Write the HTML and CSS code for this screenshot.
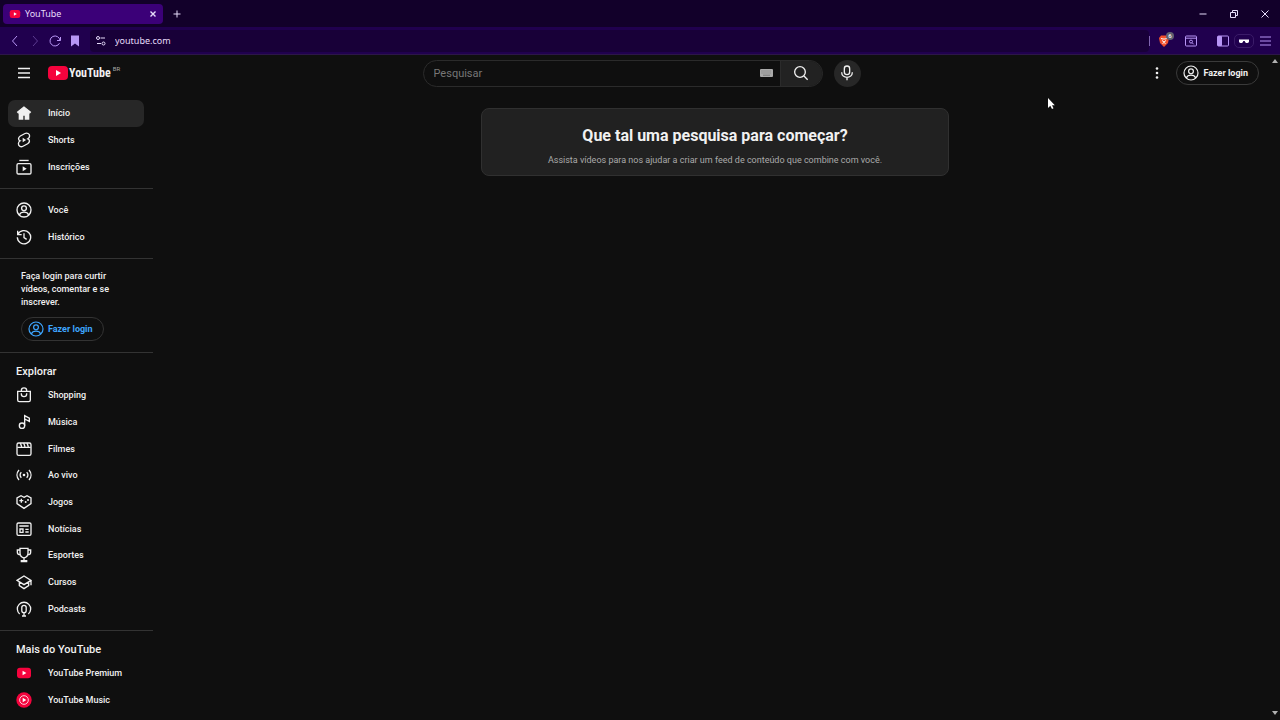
FILE: index.html
```html
<!DOCTYPE html>
<html lang="pt-BR">
<head>
  <meta charset="UTF-8" />
  <title>YouTube</title>
  <link rel="stylesheet" href="styles.css">
</head>
<body>
  <!-- shared icons -->
  <svg class="defs" aria-hidden="true">
    <symbol id="user" viewBox="0 0 24 24">
      <circle cx="12" cy="12" r="10.5" /><circle cx="12" cy="9.5" r="3.6" />
      <path d="M5 19.5c1.200-3 3.800-4.200 7-4.200s5.800 1.200 7 4.200" />
    </symbol>
    <symbol id="play" viewBox="0 0 24 24">
      <rect x="1.500" y="4" width="21" height="16" rx="4.500" fill="#f5033d" stroke="none" />
      <path d="M9.800 8.600v6.800l5.800-3.400z" fill="#fff" stroke="none" />
    </symbol>
  </svg>

  <header class="tabs">
    <div class="tab">
      <svg class="favicon"><use href="#play" /></svg>
      <span>YouTube</span>
      <button class="tab-close" aria-label="Fechar guia"><svg viewBox="0 0 10 10"><path d="M2.500 2.500l5 5M7.500 2.500l-5 5" /></svg></button>
    </div>
    <button class="new-tab" aria-label="Nova guia"><svg viewBox="0 0 10 10"><path d="M5 1.500v7M1.500 5h7" /></svg></button>
    <div class="window-buttons">
      <button aria-label="Minimizar"><svg viewBox="0 0 10 10"><path d="M1.500 5h7" /></svg></button>
      <button aria-label="Restaurar"><svg viewBox="0 0 10 10"><path d="M1.500 3.500h5v5h-5zM3.500 3.500v-2h5v5h-2" /></svg></button>
      <button aria-label="Fechar"><svg viewBox="0 0 10 10"><path d="M1.500 1.500l7 7M8.500 1.500l-7 7" /></svg></button>
    </div>
  </header>

  <div class="toolbar">
    <button aria-label="Voltar"><svg viewBox="0 0 14 14"><path d="M9 2L4.500 7 9 12" /></svg></button>
    <button class="off" aria-label="Avançar"><svg viewBox="0 0 14 14"><path d="M5 2l4.500 5L5 12" /></svg></button>
    <button aria-label="Recarregar"><svg viewBox="0 0 14 14"><path d="M11.500 9.200A5 5 0 1 1 12 6.500M9 6.500h3.500V3" /></svg></button>
    <button aria-label="Favoritos"><svg viewBox="0 0 14 14"><path d="M3 1.500h8v11L7 9.500l-4 3z" fill="currentColor" stroke="none" /></svg></button>
    <label class="address">
      <svg viewBox="0 0 14 14"><circle cx="4" cy="4" r="1.500" /><path d="M6.500 4h4.500M3 9.500h4" /><circle cx="9.500" cy="9.500" r="1.500" /></svg>
      <input type="text" value="youtube.com" aria-label="Endereço">
    </label>
    <div class="extensions">
      <i class="bar"></i>
      <button class="brave" aria-label="Brave Shields">
        <svg viewBox="0 0 14 14"><path d="M4 1.500h6l2 2.500-1 5-4 4-4-4-1-5z" fill="#f4512c" stroke="none" /><path d="M4 4.500l2 .5h2l2-.5M5 6.500l2 1.500 2-1.500M5.500 9.500L7 8.500l1.500 1" stroke="#fff" /></svg>
        <span class="badge">6</span>
      </button>
      <button class="find" aria-label="Pesquisar guias"><svg viewBox="0 0 14 14"><rect x="1.500" y="2" width="11" height="10" rx="1" /><path d="M1.500 4.200h11M8.200 8.800l1.500 1.500" /><circle cx="7" cy="7.600" r="1.500" /></svg></button>
      <button class="panel" aria-label="Barra lateral"><svg viewBox="0 0 14 14"><rect x="1.500" y="2" width="11" height="10" rx="1" /><path d="M2 2.500h3.500v9H2z" fill="currentColor" /></svg></button>
      <button class="private" aria-label="Janela privada"><svg viewBox="0 0 14 14"><path d="M2 5.500h10v1.800c0 1-.6 1.700-1.600 1.700H9.300c-.9 0-1.300-.8-1.600-1.900H6.300C6 8.200 5.600 9 4.700 9H3.600C2.600 9 2 8.300 2 7.300z" fill="currentColor" stroke="none" /></svg></button>
      <button aria-label="Menu"><svg viewBox="0 0 14 14"><path d="M2 3h11M2 7h11M2 11h11" /></svg></button>
    </div>
  </div>

  <div class="page">
    <div class="masthead">
      <div class="start">
        <button class="guide" aria-label="Guia"><svg viewBox="0 0 16 16"><path d="M2 3.500h12M2 8h12M2 12.500h12" /></svg></button>
        <a class="logo" href="#">
          <svg viewBox="0 0 20 14"><rect width="20" height="14" rx="4" fill="#f5033d" stroke="none" /><path d="M8 4v6l5-3z" fill="#fff" stroke="none" /></svg>
          <span>YouTube</span><sup>BR</sup>
        </a>
      </div>
      <form class="center">
        <div class="search">
          <input type="text" placeholder="Pesquisar" aria-label="Pesquisar">
          <svg class="keyboard" viewBox="0 0 13 8"><rect width="13" height="8" rx="1" fill="#aaa" stroke="none" /><path d="M1.500 2h10M1.500 4h10" stroke="#777" stroke-dasharray="1 1" /><path d="M3 6.200h7" stroke="#777" /></svg>
          <button type="button" aria-label="Buscar"><svg viewBox="0 0 24 24"><circle cx="10.500" cy="10.500" r="8" /><path d="M16.500 16.500l5.500 5.500" /></svg></button>
        </div>
        <button class="mic" type="button" aria-label="Pesquisar por voz"><svg viewBox="0 0 24 24"><rect x="8" y="1.500" width="8" height="13" rx="4" /><path d="M4 11c0 10 16 10 16 0M12 18.500V23" /></svg></button>
      </form>
      <div class="end">
        <button class="dots" aria-label="Configurações"><svg viewBox="0 0 16 16"><circle cx="8" cy="3.500" r="1.300" /><circle cx="8" cy="8" r="1.300" /><circle cx="8" cy="12.500" r="1.300" /></svg></button>
        <a class="login" href="#"><svg><use href="#user" /></svg>Fazer login</a>
      </div>
    </div>

    <div class="content">
      <nav class="sidebar">
        <section class="three">
          <ul>
            <li><a class="active" href="#"><svg viewBox="0 0 24 24"><path d="M12 3L2.500 10.500l1 1.200H5V21h5v-6h4v6h5v-9.300h1.500l1-1.200z" fill="currentColor" /></svg>Início</a></li>
            <li><a href="#"><svg viewBox="0 0 24 24"><path d="M13.500 2.300L6.500 6C3 8 3 12 6.300 13.200 2.500 15.500 3 20 6 21.600c1.500.8 3 .6 4.500-.2l7-3.800c3.500-2 3.500-6 .2-7.200 3.800-2.300 3.300-6.600.5-8.100-1.500-.8-3.200-.8-4.700 0z" /><path d="M10 8.800v6.400l5.200-3.200z" fill="currentColor" stroke="none" /></svg>Shorts</a></li>
            <li><a href="#"><svg viewBox="0 0 24 24"><rect x="1.500" y="7" width="21" height="15.500" rx="2" /><path d="M5 2.200h14" /><path d="M10 11v7.500l6-3.700z" fill="currentColor" stroke="none" /></svg>Inscrições</a></li>
          </ul>
        </section>
        <section class="two">
          <ul>
            <li><a href="#"><svg><use href="#user" /></svg>Você</a></li>
            <li><a href="#"><svg viewBox="0 0 24 24"><path d="M2.500 2.500v6h6M3 8a10 10 0 1 1-1 4.500M12 6.500V13l4 2.500" /></svg>Histórico</a></li>
          </ul>
        </section>
        <section class="signin">
          <p>Faça login para curtir vídeos, comentar e se inscrever.</p>
          <a class="login blue" href="#"><svg><use href="#user" /></svg>Fazer login</a>
        </section>
        <section class="nine">
          <h3>Explorar</h3>
          <ul>
            <li><a href="#"><svg viewBox="0 0 24 24"><path d="M2.500 6.500h19v13a2.500 2.500 0 0 1-2.500 2.500H5a2.500 2.500 0 0 1-2.500-2.500zM8 6.500V5.300a4 4 0 0 1 8 0v1.200M8 9.500v1a4 4 0 0 0 8 0v-1" /></svg>Shopping</a></li>
            <li><a href="#"><svg viewBox="0 0 24 24"><circle cx="9" cy="17.500" r="4" /><path d="M13 17.500V2.500l7 3.800V11l-7-3.500" /></svg>Música</a></li>
            <li><a href="#"><svg viewBox="0 0 24 24"><rect x="1.500" y="3" width="21" height="18.500" rx="2.500" /><path d="M2 9.500h20M6.500 3l2 5.500M11.500 3l2 5.500M16.500 3l2 5.500" /></svg>Filmes</a></li>
            <li><a href="#"><svg viewBox="0 0 24 24"><path d="M4.500 4.500c-4 4.500-4 10.500 0 15M19.500 4.500c4 4.500 4 10.500 0 15M8 8c-2.500 2.500-2.500 5.500 0 8M16 8c2.500 2.500 2.500 5.500 0 8" /><circle cx="12" cy="12" r="2" fill="currentColor" stroke="none" /></svg>Ao vivo</a></li>
            <li><a href="#"><svg viewBox="0 0 24 24"><path d="M12 5l4.500-2.500L22.500 6v8.500L12 21.500 1.500 14.500V6l6-3.500zM5 10h6M8 7v6" /><circle cx="14.500" cy="12" r="1.500" fill="currentColor" stroke="none" /><circle cx="18" cy="9" r="1.500" fill="currentColor" stroke="none" /></svg>Jogos</a></li>
            <li><a href="#"><svg viewBox="0 0 24 24"><rect x="1.500" y="3" width="21" height="18.500" rx="2" /><path d="M5 7.500h14M6 12h4.500v5H6zM14 12.500h5M14 16.500h5" /></svg>Notícias</a></li>
            <li><a href="#"><svg viewBox="0 0 24 24"><path d="M6 2h12v7c0 4-2 6.500-6 7.500C8 15.500 6 13 6 9zM6 4.500H2V8c0 2 2 4 5 4M18 4.500h4V8c0 2-2 4-5 4M12 16.500V20M8 22v-1.500h8V22z" /></svg>Esportes</a></li>
            <li><a href="#"><svg viewBox="0 0 24 24"><path d="M1.500 9.500L12 3l10.500 6.500L12 16zM22.500 9.500V17M5 12v5.500l7 4.500 7-4.500V12" /></svg>Cursos</a></li>
            <li><a href="#"><svg viewBox="0 0 24 24"><path d="M5.500 19.500a10 10 0 1 1 13 0M12 17v5.500M9 22.500h6" /><rect x="8.700" y="6.500" width="6.600" height="11" rx="3.300" /></svg>Podcasts</a></li>
          </ul>
        </section>
        <section class="two">
          <h3>Mais do YouTube</h3>
          <ul>
            <li><a href="#"><svg><use href="#play" /></svg>YouTube Premium</a></li>
            <li><a href="#"><svg viewBox="0 0 24 24"><circle cx="12" cy="12" r="11.500" fill="#f5033d" stroke="none" /><circle cx="12" cy="12" r="6.500" stroke="#fff" stroke-width="1.200" /><path d="M10 8.500v7l5.500-3.500z" fill="#fff" stroke="none" /></svg>YouTube Music</a></li>
          </ul>
        </section>
      </nav>

      <main>
        <div class="card">
          <h1>Que tal uma pesquisa para começar?</h1>
          <p>Assista vídeos para nos ajudar a criar um feed de conteúdo que combine com você.</p>
        </div>
      </main>
    </div>

    <div class="scrollbar">
      <svg viewBox="0 0 6 4"><path d="M0 4l3-4 3 4z" /></svg>
      <svg viewBox="0 0 6 4"><path d="M0 0l3 4 3-4z" /></svg>
    </div>
  </div>

  <svg class="cursor" viewBox="0 0 8 13"><path d="M1 1v10l2.300-2.200L5 12l1.500-.8L5 8.200h2.800z" /></svg>
</body>
</html>
```

FILE: styles.css
```css
* {
  box-sizing: border-box;
}

body {
  margin: 0;
  height: 100vh;
  display: flex;
  flex-direction: column;
  overflow: hidden;
  background: #0f0f0f;
  color: #f1f1f1;
  font-family: Roboto, sans-serif;
  font-size: 9px;
  font-weight: 500;
}

svg {
  flex: none;
  width: 16px;
  height: 16px;
  fill: none;
  stroke: currentColor;
  stroke-width: 2;
}

button {
  display: flex;
  align-items: center;
  justify-content: center;
  flex: none;
  padding: 0;
  border: none;
  background: none;
  color: inherit;
  font: inherit;
}

input {
  min-width: 0;
  padding: 0;
  border: none;
  outline: none;
  background: none;
  color: inherit;
  font: inherit;
}

a {
  color: inherit;
  text-decoration: none;
}

h1, h3, p, ul {
  margin: 0;
  padding: 0;
}

ul {
  list-style: none;
}

.defs {
  position: absolute;
  width: 0;
  height: 0;
}

/* Browser window */
.tabs {
  display: flex;
  align-items: center;
  flex: none;
  height: 27px;
  padding-left: 3px;
  background: #12002a;
  color: #e6dcfa;
  font-family: "Noto Sans", sans-serif;
  font-weight: 400;
}

.tabs svg {
  width: 10px;
  height: 10px;
  stroke-width: 1;
}

.tab {
  display: flex;
  align-items: center;
  gap: 4px;
  width: 160px;
  height: 20px;
  padding: 0 5px 0 6px;
  border-radius: 4px;
  background: #3b0078;
}

.tab .favicon {
  width: 12px;
  height: 12px;
}

.tab-close {
  margin-left: auto;
}

.tab-close svg {
  stroke-width: 1.4;
}

.new-tab {
  width: 28px;
}

.window-buttons {
  display: flex;
  margin-left: auto;
}

.window-buttons button {
  width: 31px;
}

.toolbar {
  display: flex;
  align-items: center;
  flex: none;
  height: 28px;
  padding: 0 5px;
  border-bottom: 1px solid #2c1648;
  background: #20004e;
  color: #b795f5;
}

.toolbar svg {
  width: 14px;
  height: 14px;
  stroke-width: 1;
}

.toolbar button {
  width: 20px;
  height: 20px;
}

.toolbar .off {
  opacity: 0.4;
}

.address {
  display: flex;
  align-items: center;
  flex: 1;
  gap: 7px;
  height: 22px;
  margin-left: 5px;
  padding: 0 4px;
  border-radius: 4px;
  background: #180038;
  color: #e6dcfa;
  font-family: "Noto Sans", sans-serif;
  font-weight: 400;
}

.address input {
  flex: 1;
}

.extensions {
  display: flex;
  align-items: center;
}

.bar {
  width: 1px;
  height: 10px;
  margin-right: 4px;
  background: #8065b0;
}

.toolbar .brave {
  position: relative;
}

.badge {
  position: absolute;
  top: 1px;
  right: 0;
  width: 8px;
  height: 8px;
  border-radius: 4px;
  background: #606070;
  color: #fff;
  font-size: 6px;
  line-height: 8px;
}

.find {
  margin-left: 7px;
}

.panel {
  margin-left: 12px;
}

.toolbar .private {
  height: 14px;
  margin: 0 1px;
  border: 1px solid #3a1b68;
  border-radius: 5px;
  color: #fff;
}

/* YouTube masthead */
.page {
  position: relative;
  display: flex;
  flex-direction: column;
  flex: 1;
  min-height: 0;
}

.masthead {
  display: grid;
  grid-template-columns: 1fr minmax(0, 438px) 1fr;
  align-items: center;
  flex: none;
  height: 36px;
  padding: 0 21px 0 16px;
}

.start, .center, .end, .logo {
  display: flex;
  align-items: center;
}

.guide svg {
  stroke-width: 1.5;
}

.logo {
  margin-left: 16px;
}

.logo svg {
  width: 20px;
  height: 14px;
}

.logo span {
  margin-left: 1px;
  font-family: "Roboto Condensed", Roboto, sans-serif;
  font-size: 12px;
  font-weight: 700;
}

.logo sup {
  align-self: flex-start;
  margin-left: 2px;
  color: #aaa;
  font-size: 6px;
  font-weight: 400;
  line-height: 1;
}

.center {
  gap: 11px;
  margin: 0 -4px 0 4px;
}

.search {
  display: flex;
  align-items: center;
  flex: 1;
  min-width: 0;
  height: 27px;
  border: 1px solid #2b2b2b;
  border-radius: 14px;
  overflow: hidden;
}

.search input {
  flex: 1;
  padding-left: 10px;
  font-size: 11px;
  font-weight: 400;
}

.search input::placeholder {
  color: #777;
}

.search .keyboard {
  width: 13px;
  height: 8px;
  margin-right: 7px;
  stroke-width: 1;
}

.search button {
  width: 42px;
  height: 25px;
  border-left: 1px solid #2b2b2b;
  background: #222;
}

.mic {
  width: 27px;
  height: 27px;
  border-radius: 50%;
  background: #272727;
}

.end {
  justify-content: flex-end;
  gap: 11px;
}

.dots svg {
  fill: currentColor;
  stroke: none;
}

.login {
  display: inline-flex;
  align-items: center;
  gap: 4px;
  height: 24px;
  padding: 0 10px 0 6px;
  border: 1px solid #3a3a3a;
  border-radius: 12px;
  font-weight: 700;
}

.login.blue {
  border-color: #333;
  color: #3ea6ff;
}

.login svg {
  stroke-width: 1.8;
}

/* Guide */
.content {
  display: flex;
  flex: 1;
  min-height: 0;
  padding-right: 10px;
}

.sidebar {
  flex: none;
  width: 153px;
  margin-right: 7px;
  overflow: hidden;
}

.sidebar section {
  padding: 8px 9px 8px 8px;
  border-bottom: 1px solid #333;
}

.sidebar .three {
  padding-top: 9px;
}

.sidebar ul {
  display: grid;
  grid-auto-rows: 1fr;
}

.three ul {
  height: 80px;
}

.two ul {
  height: 53px;
}

.nine ul {
  height: 240px;
}

.sidebar li a {
  display: flex;
  align-items: center;
  gap: 16px;
  height: 100%;
  padding: 0 8px;
  border-radius: 7px;
}

.sidebar li a.active {
  background: #272727;
}

.sidebar h3 {
  padding-left: 8px;
  font-size: 11px;
  font-weight: 500;
  line-height: 21px;
}

.sidebar .signin {
  padding: 11px 21px;
}

.signin p {
  margin-bottom: 8px;
  line-height: 13px;
}

/* Feed */
main {
  flex: 1;
  padding: 17px 16px;
}

.card {
  max-width: 468px;
  margin: 0 auto;
  padding: 15px 16px 8px;
  border: 1px solid #303030;
  border-radius: 8px;
  background: #212121;
  text-align: center;
}

.card h1 {
  font-size: 16px;
  font-weight: 700;
  line-height: 23px;
}

.card p {
  margin-top: 6px;
  color: #aaa;
  font-weight: 400;
  line-height: 14px;
}

.scrollbar {
  position: absolute;
  top: 0;
  right: 0;
  bottom: 0;
  display: flex;
  flex-direction: column;
  justify-content: space-between;
  padding: 4px 2px 5px;
}

.scrollbar svg {
  width: 6px;
  height: 4px;
  fill: #b0b0b0;
  stroke: none;
}

.cursor {
  position: absolute;
  top: 97px;
  left: 1047px;
  width: 8px;
  height: 13px;
  fill: #fff;
  stroke: none;
}
```
